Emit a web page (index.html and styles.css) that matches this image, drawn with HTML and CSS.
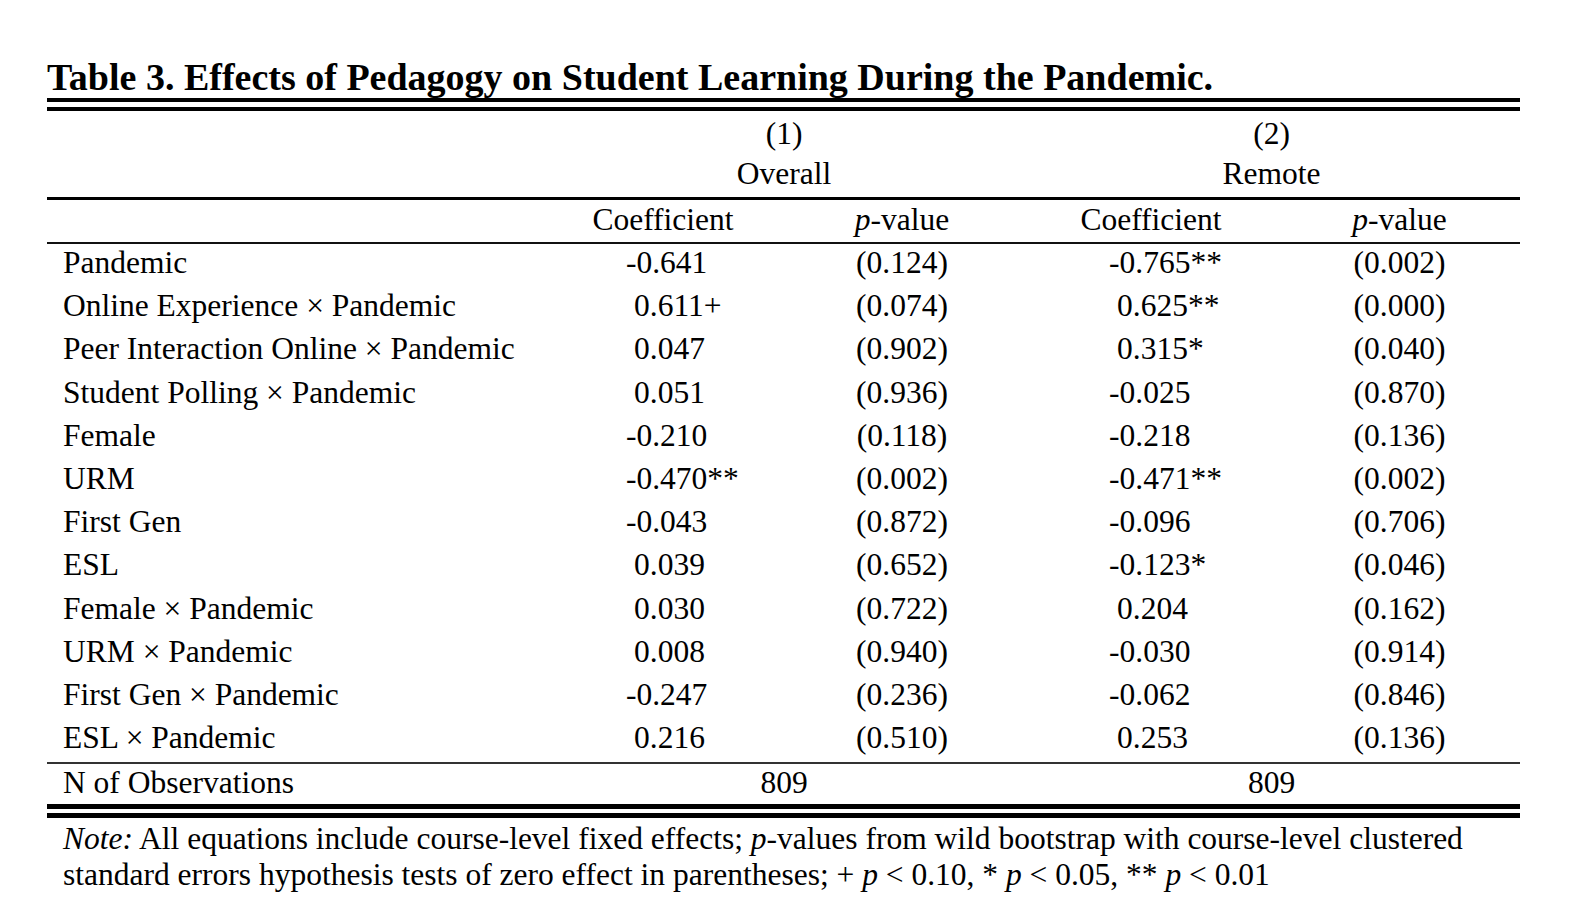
FILE: index.html
```html
<!DOCTYPE html>
<html lang="en">
<head>
<meta charset="utf-8">
<title>Table 3</title>
<link rel="stylesheet" href="styles.css">
</head>
<body>
<div class="page">
  <h1 class="title">Table 3. Effects of Pedagogy on Student Learning During the Pandemic.</h1>
  <table class="results">
    <colgroup>
      <col class="c-label">
      <col class="c-coef1">
      <col class="c-p1">
      <col class="c-coef2">
      <col class="c-p2">
    </colgroup>
    <thead>
      <tr class="h-num">
        <td></td>
        <td colspan="2" class="ctr">(1)</td>
        <td colspan="2" class="ctr">(2)</td>
      </tr>
      <tr class="h-name">
        <td></td>
        <td colspan="2" class="ctr">Overall</td>
        <td colspan="2" class="ctr">Remote</td>
      </tr>
      <tr class="h-col">
        <td></td>
        <td class="ctr">Coefficient</td>
        <td class="ctr"><i>p</i>-value</td>
        <td class="ctr">Coefficient</td>
        <td class="ctr"><i>p</i>-value</td>
      </tr>
    </thead>
    <tbody>
      <tr><td class="lbl">Pandemic</td><td class="coef c1">-0.641</td><td class="ctr">(0.124)</td><td class="coef c2">-0.765**</td><td class="ctr">(0.002)</td></tr>
      <tr><td class="lbl">Online Experience &times; Pandemic</td><td class="coef c1 pos">0.611+</td><td class="ctr">(0.074)</td><td class="coef c2 pos">0.625**</td><td class="ctr">(0.000)</td></tr>
      <tr><td class="lbl">Peer Interaction Online &times; Pandemic</td><td class="coef c1 pos">0.047</td><td class="ctr">(0.902)</td><td class="coef c2 pos">0.315*</td><td class="ctr">(0.040)</td></tr>
      <tr><td class="lbl">Student Polling &times; Pandemic</td><td class="coef c1 pos">0.051</td><td class="ctr">(0.936)</td><td class="coef c2">-0.025</td><td class="ctr">(0.870)</td></tr>
      <tr><td class="lbl">Female</td><td class="coef c1">-0.210</td><td class="ctr">(0.118)</td><td class="coef c2">-0.218</td><td class="ctr">(0.136)</td></tr>
      <tr><td class="lbl">URM</td><td class="coef c1">-0.470**</td><td class="ctr">(0.002)</td><td class="coef c2">-0.471**</td><td class="ctr">(0.002)</td></tr>
      <tr><td class="lbl">First Gen</td><td class="coef c1">-0.043</td><td class="ctr">(0.872)</td><td class="coef c2">-0.096</td><td class="ctr">(0.706)</td></tr>
      <tr><td class="lbl">ESL</td><td class="coef c1 pos">0.039</td><td class="ctr">(0.652)</td><td class="coef c2">-0.123*</td><td class="ctr">(0.046)</td></tr>
      <tr><td class="lbl">Female &times; Pandemic</td><td class="coef c1 pos">0.030</td><td class="ctr">(0.722)</td><td class="coef c2 pos">0.204</td><td class="ctr">(0.162)</td></tr>
      <tr><td class="lbl">URM &times; Pandemic</td><td class="coef c1 pos">0.008</td><td class="ctr">(0.940)</td><td class="coef c2">-0.030</td><td class="ctr">(0.914)</td></tr>
      <tr><td class="lbl">First Gen &times; Pandemic</td><td class="coef c1">-0.247</td><td class="ctr">(0.236)</td><td class="coef c2">-0.062</td><td class="ctr">(0.846)</td></tr>
      <tr class="last"><td class="lbl">ESL &times; Pandemic</td><td class="coef c1 pos">0.216</td><td class="ctr">(0.510)</td><td class="coef c2 pos">0.253</td><td class="ctr">(0.136)</td></tr>
    </tbody>
    <tfoot>
      <tr class="obs">
        <td class="lbl">N of Observations</td>
        <td colspan="2" class="ctr">809</td>
        <td colspan="2" class="ctr">809</td>
      </tr>
    </tfoot>
  </table>
  <p class="note"><i>Note:</i> All equations include course-level fixed effects; <i>p</i>-values from wild bootstrap with course-level clustered<br>standard errors hypothesis tests of zero effect in parentheses; + <i>p</i> &lt; 0.10, * <i>p</i> &lt; 0.05, ** <i>p</i> &lt; 0.01</p>
</div>
</body>
</html>
```

FILE: styles.css
```css
html, body {
  margin: 0;
  padding: 0;
  background: #ffffff;
}

body {
  font-family: "Liberation Serif", "Times New Roman", serif;
  color: #000000;
}

.page {
  width: 1473px;
  padding: 57px 0 0 47px;
}

.title {
  margin: 0;
  font-size: 38px;
  font-weight: bold;
  line-height: 40px;
  padding-bottom: 1px;
  border-bottom: 13px double #000000;
  white-space: nowrap;
}

.results {
  width: 1473px;
  table-layout: fixed;
  border-collapse: separate;
  border-spacing: 0;
  font-size: 31.5px;
}

.c-label { width: 498px; }
.c-coef1 { width: 236px; }
.c-p1 { width: 242px; }
.c-coef2 { width: 256px; }
.c-p2 { width: 241px; }

.results td {
  padding: 0;
  white-space: nowrap;
  vertical-align: top;
}

.ctr { text-align: center; }

.lbl {
  padding-left: 16px !important;
  text-align: left;
}

.coef { text-align: left; }
.coef.c1 { padding-left: 81px !important; }
.coef.c2 { padding-left: 86px !important; }
.coef.c1.pos { padding-left: 89px !important; }
.coef.c2.pos { padding-left: 94px !important; }

.h-num td {
  line-height: 40px;
  padding-top: 3px !important;
}

.h-name td {
  line-height: 40px;
  padding-bottom: 3px !important;
  border-bottom: 3px solid #000000;
}

.h-col td {
  line-height: 40px;
  padding-bottom: 2px !important;
  border-bottom: 2px solid #111111;
}

.results tbody td {
  line-height: 38.2px;
  padding-bottom: 5px;
}

.results tbody tr.last td {
  border-bottom: 2px solid #333333;
}

.obs td {
  line-height: 38px;
  padding-bottom: 2px !important;
  border-bottom: 14px double #000000;
}

.note {
  margin: 0;
  padding: 3px 0 0 16px;
  font-size: 31.5px;
  line-height: 35.3px;
  white-space: nowrap;
}
```
